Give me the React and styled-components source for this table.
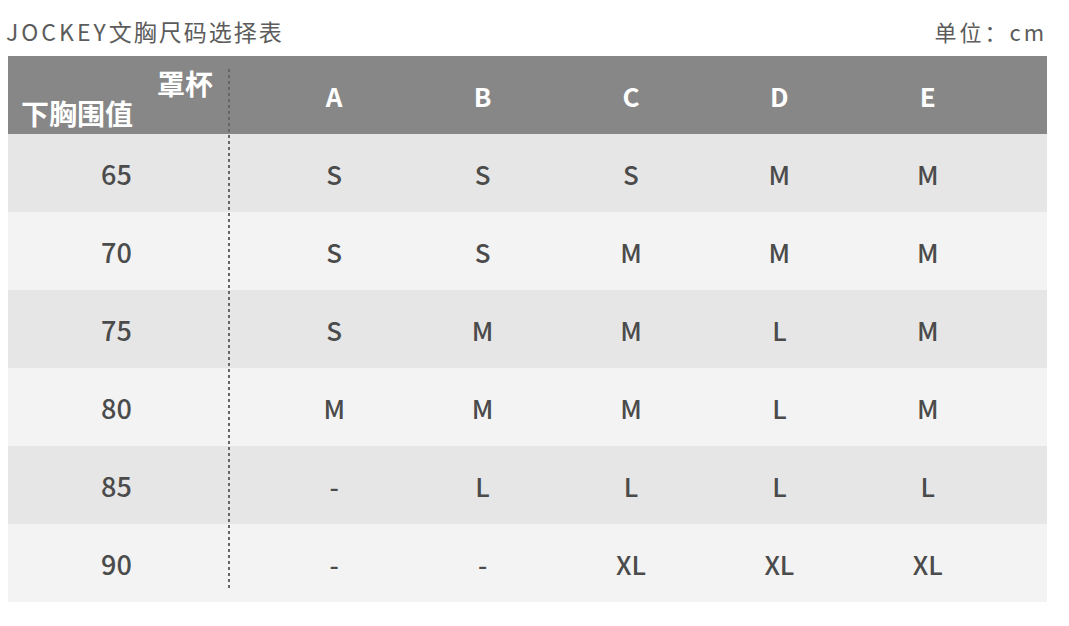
import React from "react";
import styled, { createGlobalStyle } from "styled-components";

const GlobalStyle = createGlobalStyle`
  body {
    margin: 0;
    background: #ffffff;
    font-family: "Noto Sans CJK SC", "Noto Sans", sans-serif;
  }
`;

const cups = ["A", "B", "C", "D", "E"];

const rows = [
  { band: "65", sizes: ["S", "S", "S", "M", "M"] },
  { band: "70", sizes: ["S", "S", "M", "M", "M"] },
  { band: "75", sizes: ["S", "M", "M", "L", "M"] },
  { band: "80", sizes: ["M", "M", "M", "L", "M"] },
  { band: "85", sizes: ["-", "L", "L", "L", "L"] },
  { band: "90", sizes: ["-", "-", "XL", "XL", "XL"] },
];

export default function App() {
  return (
    <Page>
      <GlobalStyle />
      <TitleBar>
        <Title>
          <Brand>JOCKEY</Brand>
          <TitleCjk>文胸尺码选择表</TitleCjk>
        </Title>
        <Unit>单位：cm</Unit>
      </TitleBar>
      <Table>
        <Divider />
        <HeadRow>
          <CornerCell>
            <CornerTop>罩杯</CornerTop>
            <CornerBottom>下胸围值</CornerBottom>
          </CornerCell>
          <Values>
            {cups.map((c) => (
              <HeadCell key={c}>{c}</HeadCell>
            ))}
          </Values>
        </HeadRow>
        {rows.map((r, i) => (
          <Row key={r.band} $odd={i % 2 === 0}>
            <BandCell>{r.band}</BandCell>
            <Values>
              {r.sizes.map((s, j) => (
                <Cell key={j}>{s}</Cell>
              ))}
            </Values>
          </Row>
        ))}
      </Table>
    </Page>
  );
}

const Page = styled.div`
  width: 1039px;
  padding-left: 8px;
`;

const TitleBar = styled.div`
  height: 56px;
  display: flex;
  align-items: center;
  justify-content: space-between;
  padding-top: 6px;
  box-sizing: border-box;
  color: #5c5c5c;
`;

const Title = styled.div`
  font-size: 23px;
  font-weight: 400;
  margin-left: -2px;
  white-space: nowrap;
`;

const Brand = styled.span`
  letter-spacing: 3px;
`;

const TitleCjk = styled.span`
  letter-spacing: 2px;
`;

const Unit = styled.div`
  font-size: 22px;
  letter-spacing: 3px;
  margin-right: 0;
`;

const Table = styled.div`
  position: relative;
`;

const Divider = styled.div`
  position: absolute;
  left: 220px;
  top: 13px;
  bottom: 13px;
  width: 2px;
  background-image: linear-gradient(#666666 50%, transparent 50%);
  background-size: 2px 6px;
  z-index: 1;
`;

const HeadRow = styled.div`
  display: flex;
  height: 78px;
  background: #878787;
  color: #ffffff;
  font-weight: 700;
`;

const CornerCell = styled.div`
  width: 221px;
  display: flex;
  flex-direction: column;
  padding-top: 12px;
  box-sizing: border-box;
  font-size: 28px;
  line-height: 30px;
`;

const CornerTop = styled.div`
  align-self: flex-end;
  padding-right: 16px;
`;

const CornerBottom = styled.div`
  padding-left: 13px;
`;

const Values = styled.div`
  flex: 1;
  display: grid;
  grid-template-columns: repeat(5, 1fr);
  padding: 0 45px 0 31px;
`;

const HeadCell = styled.div`
  display: flex;
  align-items: center;
  justify-content: center;
  font-size: 26px;
  font-weight: 700;
`;

const Row = styled.div`
  display: flex;
  height: 78px;
  background: ${(p) => (p.$odd ? "#e6e6e6" : "#f3f3f3")};
  color: #4b4b4b;
`;

const BandCell = styled.div`
  width: 221px;
  display: flex;
  align-items: center;
  justify-content: center;
  font-size: 27px;
  font-weight: 500;
  padding-right: 4px;
  box-sizing: border-box;
`;

const Cell = styled.div`
  display: flex;
  align-items: center;
  justify-content: center;
  font-size: 26px;
  font-weight: 500;
`;
